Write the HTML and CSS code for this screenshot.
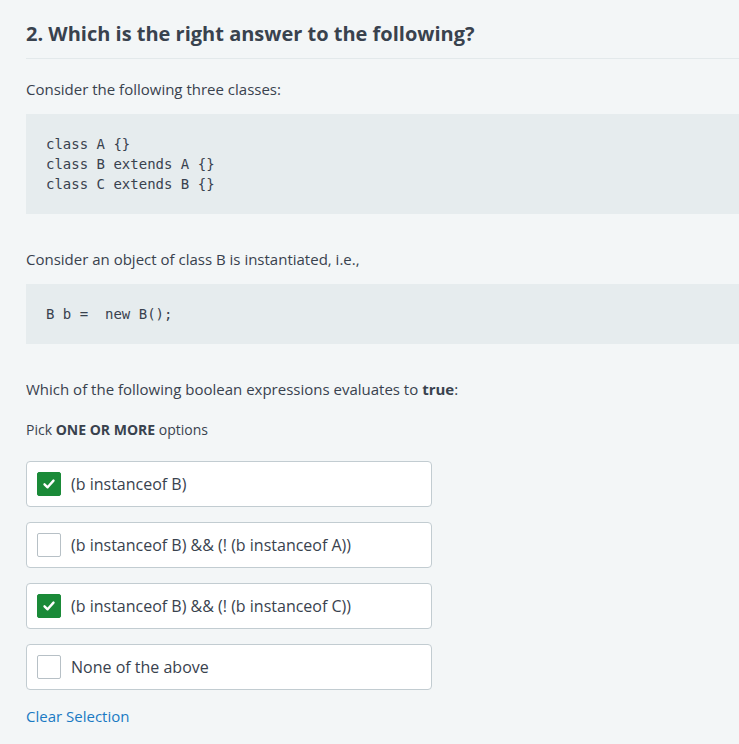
FILE: index.html
```html
<!DOCTYPE html>
<html>
<head>
<meta charset="utf-8">
<link rel="stylesheet" href="styles.css">
</head>
<body>
<div class="question">
  <h2 class="title">2. Which is the right answer to the following?</h2>
  <p class="text first">Consider the following three classes:</p>
  <pre class="code">class A {}
class B extends A {}
class C extends B {}</pre>
  <p class="text">Consider an object of class B is instantiated, i.e.,</p>
  <pre class="code">B b =  new B();</pre>
  <p class="text">Which of the following boolean expressions evaluates to <strong>true</strong>:</p>
  <p class="hint">Pick <strong>ONE OR MORE</strong> options</p>
  <div class="options">
    <label class="option">
      <span class="box checked"><svg width="14" height="14" viewBox="0 0 14 14"><path d="M2.5 7.3 L5.6 10.3 L11.5 3.6" fill="none" stroke="#fff" stroke-width="2.4" stroke-linecap="round" stroke-linejoin="round"/></svg></span>
      <span class="label">(b instanceof B)</span>
    </label>
    <label class="option">
      <span class="box"></span>
      <span class="label">(b instanceof B) &amp;&amp; (! (b instanceof A))</span>
    </label>
    <label class="option">
      <span class="box checked"><svg width="14" height="14" viewBox="0 0 14 14"><path d="M2.5 7.3 L5.6 10.3 L11.5 3.6" fill="none" stroke="#fff" stroke-width="2.4" stroke-linecap="round" stroke-linejoin="round"/></svg></span>
      <span class="label">(b instanceof B) &amp;&amp; (! (b instanceof C))</span>
    </label>
    <label class="option">
      <span class="box"></span>
      <span class="label">None of the above</span>
    </label>
  </div>
  <a class="clear" href="#">Clear Selection</a>
</div>
</body>
</html>
```
FILE: styles.css
```css
html, body {
  margin: 0;
  padding: 0;
  background: #f3f6f7;
}
body {
  font-family: "Open Sans", "Noto Sans", sans-serif;
  color: #39424e;
  overflow: hidden;
}
.question {
  padding: 20px 0 0 26px;
}
.title {
  margin: 0;
  font-size: 20px;
  line-height: 28px;
  font-weight: 700;
  padding-bottom: 10px;
  border-bottom: 1px solid #e3e9eb;
}
.text {
  margin: 0;
  font-size: 15px;
  line-height: 20px;
}
.text.first {
  margin-top: 20px;
}
.code {
  margin: 15px 0 35px 0;
  padding: 20px;
  background: #e6ecee;
  font-family: "DejaVu Sans Mono", monospace;
  font-size: 14px;
  line-height: 20px;
  color: #39424e;
}
.hint {
  margin: 21px 0 0 0;
  font-size: 14px;
  line-height: 20px;
}
.options {
  margin-top: 21px;
  width: 406px;
  display: flex;
  flex-direction: column;
  gap: 15px;
}
.option {
  box-sizing: border-box;
  height: 46px;
  display: flex;
  align-items: center;
  padding: 0 10px;
  background: #fff;
  border: 1px solid #c2ccd1;
  border-radius: 4px;
}
.box {
  box-sizing: border-box;
  width: 24px;
  height: 24px;
  border: 1px solid #b7c0c6;
  border-radius: 2px;
  background: #fff;
  display: flex;
  align-items: center;
  justify-content: center;
  margin-right: 10px;
}
.box.checked {
  background: #1a8a38;
  border-color: #1a8a38;
}
.label {
  font-size: 16px;
  line-height: 20px;
}
.clear {
  display: inline-block;
  margin-top: 16px;
  font-size: 15px;
  line-height: 20px;
  color: #1a7ac3;
  text-decoration: none;
}
```
